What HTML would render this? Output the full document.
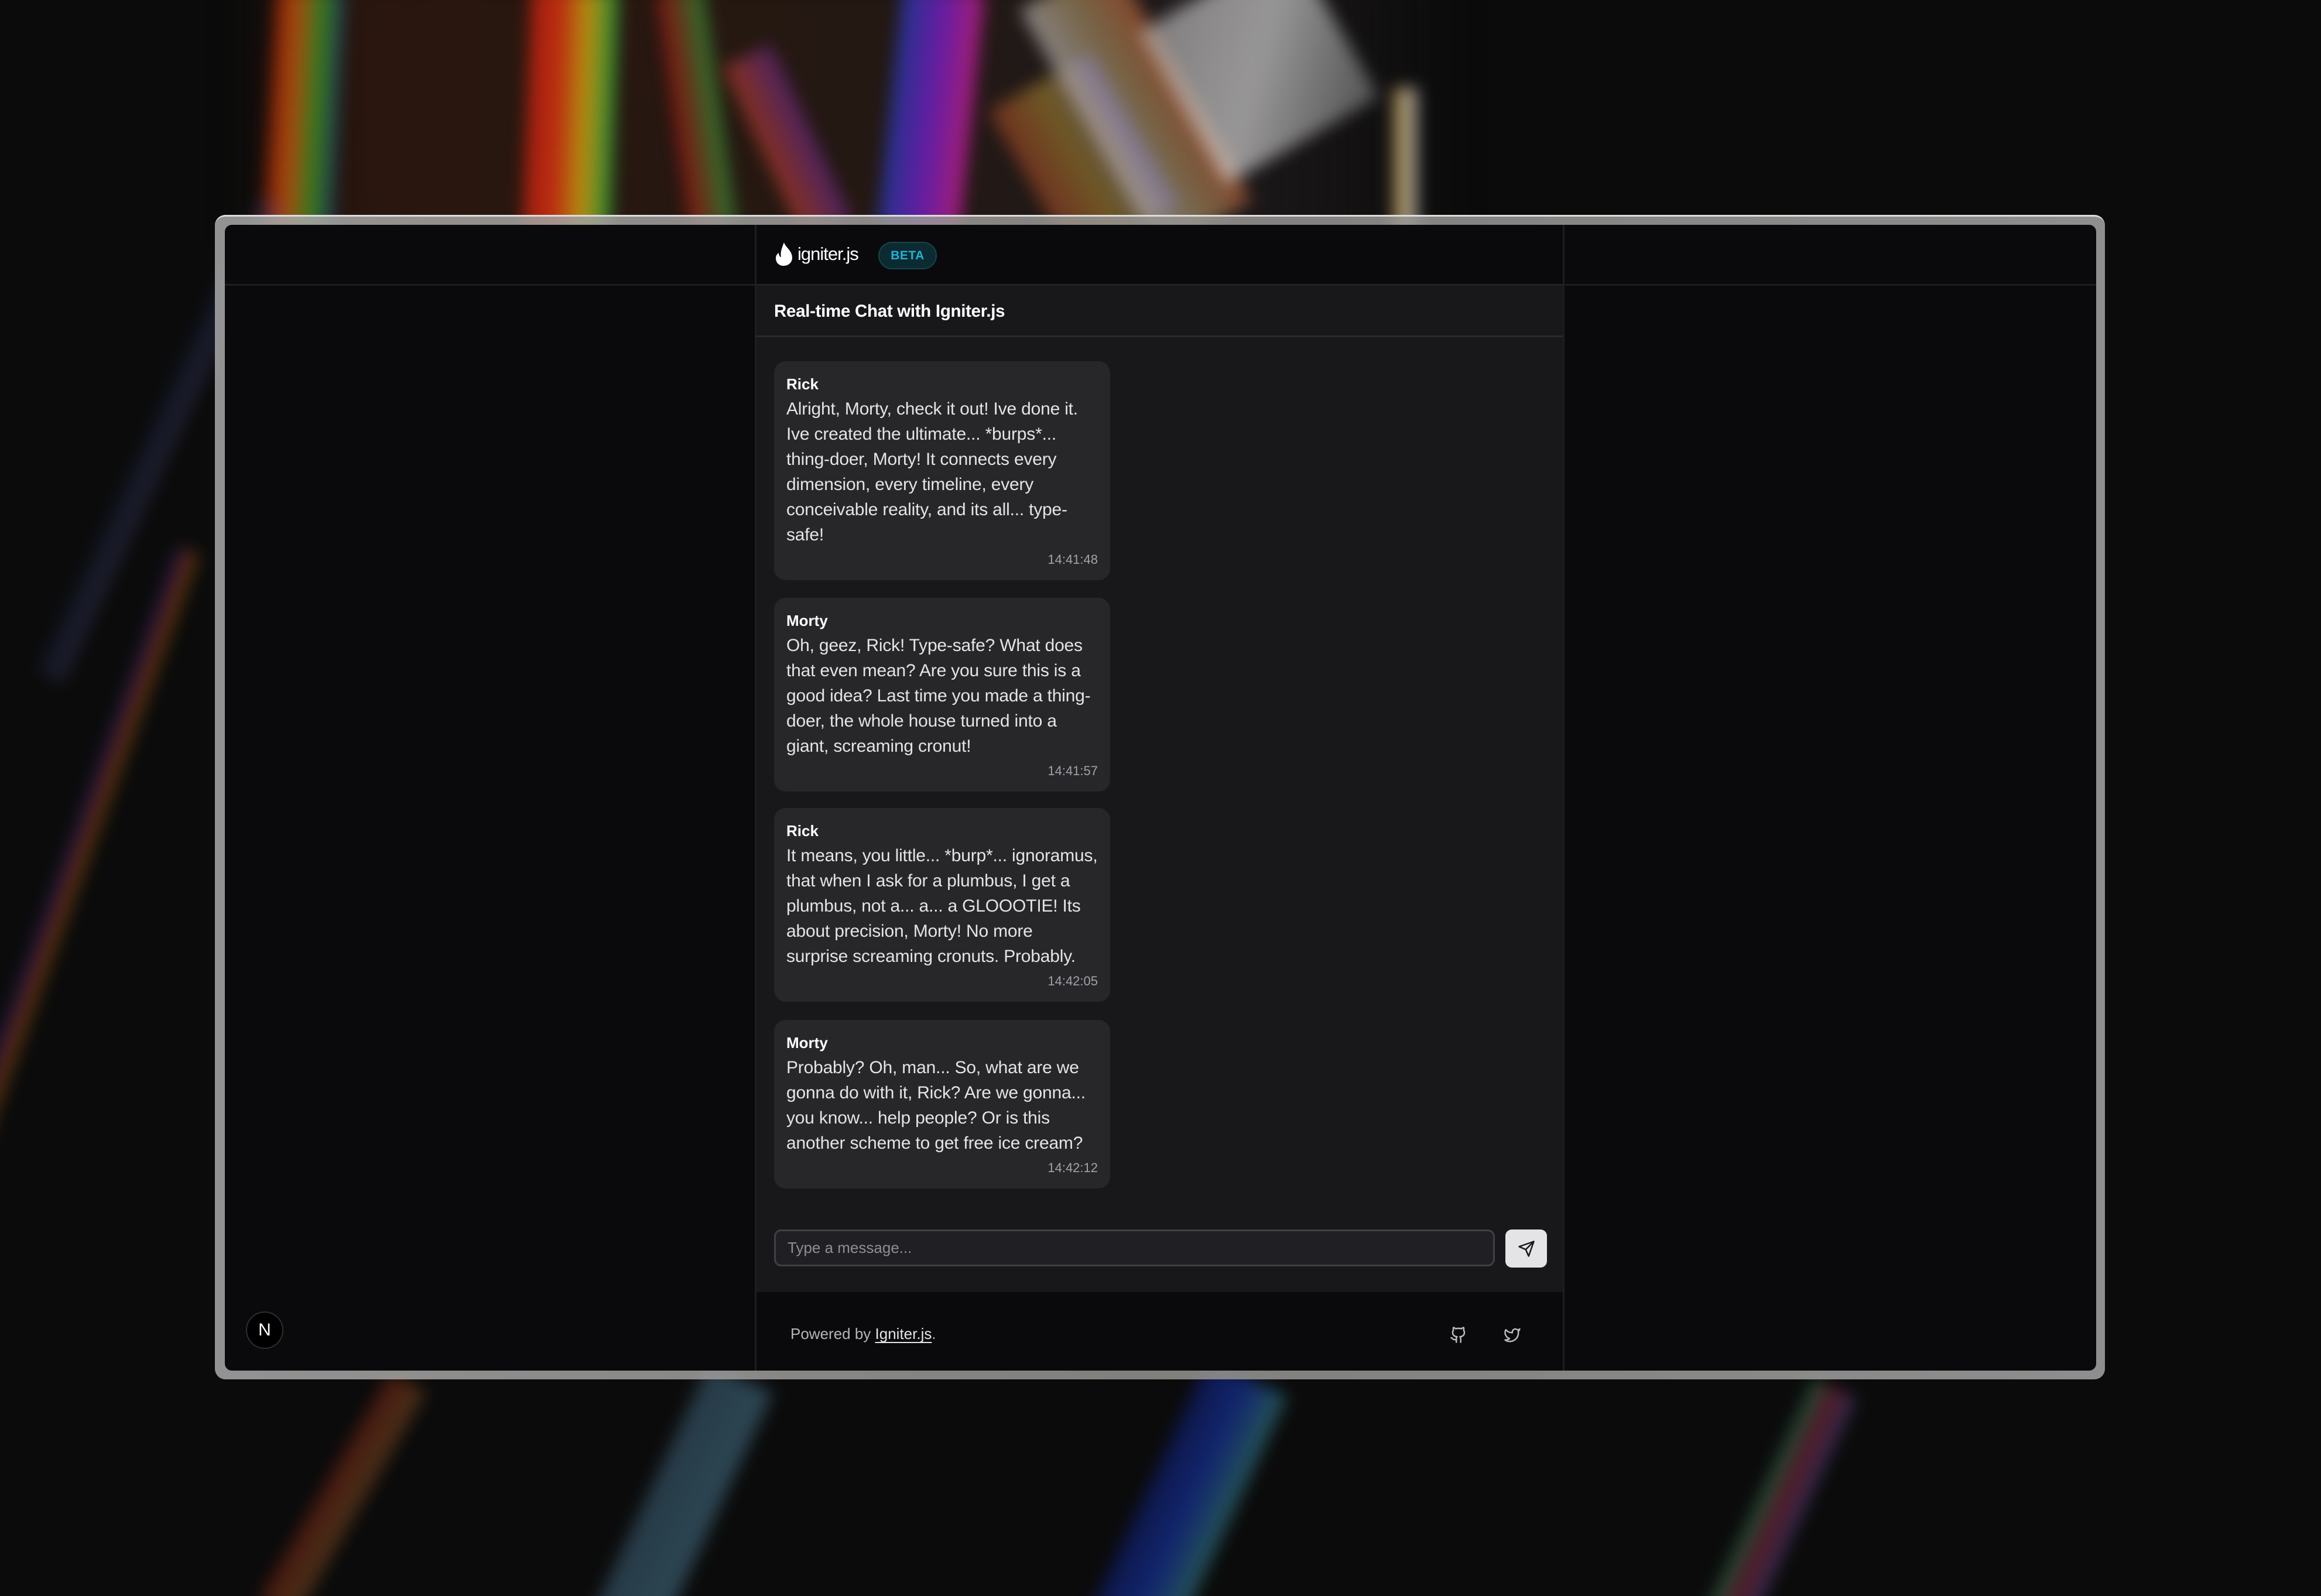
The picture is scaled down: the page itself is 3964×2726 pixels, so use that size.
<!DOCTYPE html>
<html><head><meta charset="utf-8">
<style>
*{margin:0;padding:0;box-sizing:border-box}
html,body{width:3964px;height:2726px;overflow:hidden;background:#0b0b0b;font-family:"Liberation Sans",sans-serif}
.bg{position:absolute;inset:0;overflow:hidden}
.s{position:absolute;filter:blur(14px)}
.frame{position:absolute;left:367px;top:367px;width:3228px;height:1989px;border-radius:18px;background:linear-gradient(90deg,rgba(170,170,170,.85),rgba(150,148,145,.85) 50%,rgba(165,165,165,.85));border-top:3px solid #ddd}
.inner{position:absolute;left:384px;top:384px;width:3196px;height:1957px;border-radius:12px;background:#0a0a0c;overflow:hidden}
.hline{position:absolute;left:0;right:0;top:101px;height:3px;background:#1e1e21}
.col{position:absolute;left:905px;top:0;width:1383px;height:1957px;border-left:3px solid #1e1e21;border-right:3px solid #1e1e21}
.head{position:absolute;left:0;right:0;top:0;height:104px;background:#0a0a0c;border-bottom:3px solid #222225}
.logo{position:absolute;left:30px;top:29px;display:flex;align-items:center}
.logo span{color:#fff;font-size:31px;letter-spacing:-1px;margin-left:6px}
.beta{position:absolute;left:208px;top:29px;width:100px;height:47px;border-radius:24px;background:#0b2a31;border:2px solid #17444d;color:#22b3d4;font-size:21px;font-weight:bold;display:flex;align-items:center;justify-content:center;letter-spacing:.5px}
.chat{position:absolute;left:0;right:0;top:104px;height:1719px;background:#18181b}
.title{height:88px;border-bottom:3px solid #2a2a2e;color:#fff;font-weight:bold;font-size:29.5px;padding-left:30px;line-height:88px;letter-spacing:-.3px}
.b{position:absolute;left:30px;width:574px;background:#27272a;border-radius:20px;padding:19px 21px 20px;color:#e4e4e7}
.b .n{font-weight:bold;font-size:26px;line-height:41px;color:#fff}
.b .t{font-size:30px;line-height:43px;white-space:nowrap;letter-spacing:-.2px}
.b .ts{font-size:22px;line-height:30px;margin-top:6px;text-align:right;color:#a1a1aa}
.input{position:absolute;left:30px;top:1612px;width:1231px;height:63px;border:3px solid #3f3f46;border-radius:12px;background:#202024;color:#8d8d95;font-size:26px;line-height:57px;padding-left:20px}
.send{position:absolute;left:1279px;top:1612px;width:71px;height:65px;border-radius:11px;background:#e4e4e7;display:flex;align-items:center;justify-content:center}
.foot{position:absolute;left:0;right:0;top:1823px;height:134px;background:#0a0a0c}
.foot .p{position:absolute;left:58px;top:56px;font-size:26px;color:#b4b4bb}
.foot .p u{color:#e4e4e7;text-decoration-thickness:2px;text-underline-offset:5px}
.ic{position:absolute;top:58px}
.nb{position:absolute;left:36px;top:1856px;width:64px;height:64px;border-radius:50%;background:#000;border:2px solid #2e2e30;color:#fff;font-size:30px;display:flex;align-items:center;justify-content:center}
</style></head><body>
<div class="bg">
 <div class="s" style="left:400px;top:-50px;width:2100px;height:470px;background:linear-gradient(90deg,rgba(40,20,10,0),#2a160e 10%,#241812 50%,#1e1a1c 80%,rgba(20,20,20,0));filter:blur(30px)"></div>
 <div class="s" style="left:460px;top:-20px;width:120px;height:420px;background:linear-gradient(90deg,#a02008,#d86010,#3aa020,#204070);opacity:.75;transform:rotate(3deg)"></div>
 <div class="s" style="left:900px;top:-20px;width:150px;height:420px;background:linear-gradient(90deg,#c02010,#e03010,#d8b010,#20a040);opacity:.8;transform:rotate(2deg)"></div>
 <div class="s" style="left:1150px;top:-20px;width:80px;height:420px;background:linear-gradient(90deg,#c01010,#30b040);opacity:.6;transform:rotate(-8deg)"></div>
 <div class="s" style="left:1520px;top:-20px;width:140px;height:420px;background:linear-gradient(90deg,#2040c0,#8020e0,#e020a0);opacity:.7;transform:rotate(6deg)"></div>
 <div class="s" style="left:1300px;top:80px;width:90px;height:330px;background:linear-gradient(90deg,#ff5030,#8030c0);opacity:.45;transform:rotate(-25deg)"></div>
 <div class="s" style="left:1850px;top:-60px;width:180px;height:480px;background:linear-gradient(90deg,#fff,#e0c080,#ff8040);opacity:.45;transform:rotate(-30deg)"></div>
 <div class="s" style="left:2000px;top:-40px;width:300px;height:300px;background:linear-gradient(135deg,#ccc,#fff,#888);opacity:.55;transform:rotate(-30deg)"></div>
 <div class="s" style="left:2380px;top:150px;width:40px;height:260px;background:linear-gradient(90deg,#ffd060,#fff);opacity:.6"></div>
 <div class="s" style="left:1750px;top:120px;width:200px;height:300px;background:linear-gradient(90deg,#ff6030,#ffd040,#8080ff);opacity:.35;transform:rotate(-30deg)"></div>
 <div class="s" style="left:80px;top:900px;width:40px;height:1300px;background:linear-gradient(90deg,#3050ff,#ff3030,#ffd000);transform:rotate(20deg);opacity:.3"></div>
 <div class="s" style="left:250px;top:300px;width:50px;height:900px;background:linear-gradient(90deg,#203060,#6060a0);transform:rotate(25deg);opacity:.25"></div>
 <div class="s" style="left:1100px;top:2330px;width:120px;height:500px;background:linear-gradient(90deg,#5080a0,#60a0c0);transform:rotate(25deg);opacity:.4"></div>
 <div class="s" style="left:1950px;top:2330px;width:150px;height:500px;background:linear-gradient(90deg,#102080,#1840d0,#40a0a0);transform:rotate(25deg);opacity:.5"></div>
 <div class="s" style="left:550px;top:2330px;width:70px;height:450px;background:linear-gradient(90deg,#ff4020,#ffa040);transform:rotate(30deg);opacity:.25"></div>
 <div class="s" style="left:3000px;top:2350px;width:80px;height:450px;background:linear-gradient(90deg,#40ffa0,#ff3060,#8080ff);transform:rotate(25deg);opacity:.3"></div>
</div>
<div class="frame"></div>
<div class="inner">
 <div class="hline"></div>
 <div class="nb">N</div>
 <div class="col">
  <div class="head">
   <div class="logo">
    <svg width="34" height="42" viewBox="0 0 34 42"><path d="M17 1C19 9 31 15 31 27C31 35 25 41 16 41C8 41 3 35 3 28C3 23 6 20 8 19C8 23 10 26 12 26C10 18 14 9 17 1Z" fill="#fff"/></svg>
    <span>igniter.js</span>
   </div>
   <div class="beta">BETA</div>
  </div>
  <div class="chat">
   <div class="title">Real-time Chat with Igniter.js</div>
   <div class="b" style="top:129px"><div class="n">Rick</div><div class="t">Alright, Morty, check it out! Ive done it.<br>Ive created the ultimate... *burps*...<br>thing-doer, Morty! It connects every<br>dimension, every timeline, every<br>conceivable reality, and its all... type-<br>safe!</div><div class="ts">14:41:48</div></div>
   <div class="b" style="top:533px"><div class="n">Morty</div><div class="t">Oh, geez, Rick! Type-safe? What does<br>that even mean? Are you sure this is a<br>good idea? Last time you made a thing-<br>doer, the whole house turned into a<br>giant, screaming cronut!</div><div class="ts">14:41:57</div></div>
   <div class="b" style="top:892px"><div class="n">Rick</div><div class="t">It means, you little... *burp*... ignoramus,<br>that when I ask for a plumbus, I get a<br>plumbus, not a... a... a GLOOOTIE! Its<br>about precision, Morty! No more<br>surprise screaming cronuts. Probably.</div><div class="ts">14:42:05</div></div>
   <div class="b" style="top:1254px"><div class="n">Morty</div><div class="t">Probably? Oh, man... So, what are we<br>gonna do with it, Rick? Are we gonna...<br>you know... help people? Or is this<br>another scheme to get free ice cream?</div><div class="ts">14:42:12</div></div>
   <div class="input">Type a message...</div>
   <div class="send"><svg width="30" height="30" viewBox="0 0 24 24" fill="none" stroke="#18181b" stroke-width="2" stroke-linecap="round" stroke-linejoin="round"><path d="M22 2L11 13"/><path d="M22 2L15 22L11 13L2 9Z"/></svg></div>
  </div>
  <div class="foot">
   <div class="p">Powered by <u>Igniter.js</u>.</div>
   <svg class="ic" style="left:1184px" width="30" height="30" viewBox="0 0 24 24" fill="none" stroke="#bbb" stroke-width="2" stroke-linecap="round" stroke-linejoin="round"><path d="M15 22v-4a4.8 4.8 0 0 0-1-3.5c3 0 6-2 6-5.5.08-1.250-.27-2.48-1-3.5.28-1.15.28-2.35 0-3.5 0 0-1 0-3 1.5-2.64-.5-5.36-.5-8 0C6 2 5 2 5 2c-.3 1.15-.3 2.35 0 3.5A5.4 5.4 0 0 0 4 9c0 3.5 3 5.5 6 5.5-.39.49-.68 1.05-.85 1.65-.17.6-.22 1.23-.15 1.850v4"/><path d="M9 18c-4.51 2-5-2-7-2"/></svg>
   <svg class="ic" style="left:1276px" width="30" height="30" viewBox="0 0 24 24" fill="none" stroke="#bbb" stroke-width="2" stroke-linecap="round" stroke-linejoin="round"><path d="M22 4s-.7 2.1-2 3.4c1.6 10-9.4 17.3-18 11.6 2.2.1 4.4-.6 6-2C3 15.5.5 9.6 3 5c2.2 2.6 5.6 4.1 9 4-.9-4.2 4-6.6 7-3.8 1.1 0 3-1.2 3-1.2z"/></svg>
  </div>
 </div>
</div>
</body></html>
